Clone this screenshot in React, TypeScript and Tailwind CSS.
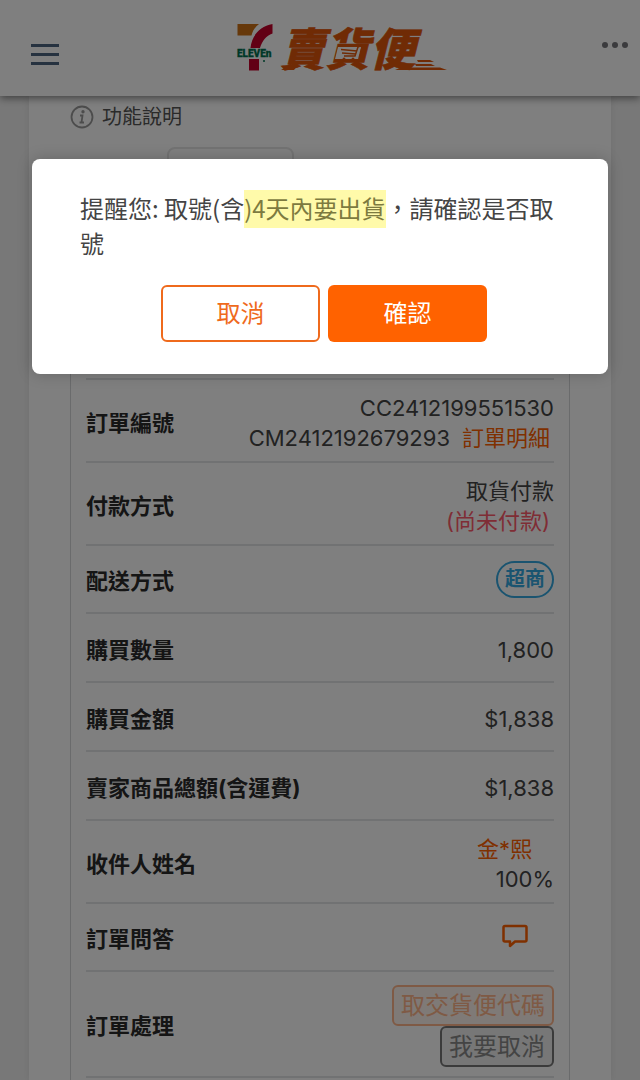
import type { ReactNode } from "react";

function Logo() {
  return (
    <svg viewBox="0 0 212 50" className="ml-6 h-[50px] w-[212px] overflow-visible" role="img" aria-label="7-ELEVEN 賣貨便">
      <path d="M0.500 1H22C18 4 15.500 8 14.500 12.500H0.500Z" fill="#cc7014" />
      <path d="M35.500 1V10.500C29 13 25 18 23 25H13.500C14.500 14 22 3 35.500 1Z" fill="#c4002a" />
      <path d="M12 36H22V47.500H12Z" fill="#c4002a" />
      <text x="0" y="34" fontSize="10" fontWeight="900" fontFamily="Roboto, sans-serif" fill="#00704f" stroke="#00704f" strokeWidth="0.300">ELEVEn</text>
      <circle cx="27" cy="38" r="1" fill="#00704f" />
      <text x="43" y="43" fontSize="45" fontWeight="900" fontStyle="italic" fontFamily="'Noto Sans CJK TC', sans-serif" fill="#e0560a" stroke="#e0560a" strokeWidth="0.600">賣貨便</text>
      <path d="M101 24H124L121 36H98Z" fill="#fff" />
      <path d="M125 22L121 24L118 33H107M104 26.500L120 28M105 30L119 31" fill="none" stroke="#e0560a" strokeWidth="1.500" />
      <circle cx="107" cy="36" r="1.500" fill="#e0560a" />
      <circle cx="116" cy="36" r="1.500" fill="#e0560a" />
      <path d="M44 47L51 43H60L57 47ZM158 47L164 44.500H203L210 47ZM180 37H193L197 39H181ZM178 41H194L198 43H179Z" fill="#e0560a" />
    </svg>
  );
}

const rowHeights = {
  tall: "h-[83px]",
  normal: "h-[69px]",
  compact: "h-[68px]",
  actions: "h-[106px]",
};

function Row({ label, size = "normal", children }: { label: string; size?: keyof typeof rowHeights; children: ReactNode }) {
  return (
    <tr className={`flex items-center justify-between border-b-2 border-[#e2e5e7] pt-1 ${rowHeights[size]}`}>
      <th scope="row" className="text-left font-bold whitespace-nowrap text-[#2a2a2a]">
        {label}
      </th>
      <td className="text-right whitespace-nowrap">{children}</td>
    </tr>
  );
}

export default function App() {
  return (
    <div className="relative flex min-h-screen flex-col bg-[#f1f1f1] font-['Inter','Noto_Sans_CJK_TC',sans-serif] text-[22px] leading-[30px] text-[#444]">
      <header className="relative z-10 flex h-24 items-center justify-between bg-white pr-3 pl-[31px] shadow-[0_2px_8px_rgba(0,0,0,0.5)]">
        <button type="button" aria-label="選單" className="mt-3 flex w-7 flex-col gap-[6px]">
          <span className="h-[3px] bg-[#4c6480]" />
          <span className="h-[3px] bg-[#4c6480]" />
          <span className="h-[3px] bg-[#4c6480]" />
        </button>
        <Logo />
        <button type="button" aria-label="更多" className="mb-[6px] flex gap-1">
          <span className="size-[6px] rounded-full bg-[#77777c]" />
          <span className="size-[6px] rounded-full bg-[#77777c]" />
          <span className="size-[6px] rounded-full bg-[#77777c]" />
        </button>
      </header>

      <main className="mx-[29px] flex grow flex-col bg-white px-[41px] shadow-[0_0_8px_rgba(0,0,0,0.08)]">
        <p className="flex items-center gap-2 pt-[6px] text-[20px] text-[#555]">
          <svg viewBox="0 0 24 24" className="size-6" fill="none" stroke="#999" strokeWidth="1.800">
            <circle cx="12" cy="12" r="10.500" />
            <path d="M10 10.500H12.500L11.500 17.500H14M9.500 17.500H11.500" />
            <circle cx="13" cy="6.800" r="0.800" fill="#999" />
          </svg>
          功能說明
        </p>
        <input aria-label="篩選" className="mt-[15px] ml-[97px] h-11 w-[127px] rounded-lg border-2 border-[#e6e6e6]" />

        <section className="mt-2 grow border-x border-t border-[#d4d7d9] px-[15px]">
          <table className="block w-full">
            <tbody className="block">
              <tr className="block border-b-2 border-[#e2e5e7]">
                <td className="block h-[178px]" />
              </tr>
              <Row label="訂單編號" size="tall">
                CC2412199551530
                <br />
                CM2412192679293
                <a href="#detail" className="mr-1 ml-3 text-[#ff6000]">訂單明細</a>
              </Row>
              <Row label="付款方式" size="tall">
                取貨付款
                <br />
                <span className="mr-1 text-[#ff5a6a]">(尚未付款)</span>
              </Row>
              <Row label="配送方式" size="compact">
                <span className="mb-1 inline-block rounded-full border-2 border-[#35a8e0] px-[7px] align-middle text-[20px] leading-[33px] font-bold text-[#35a8e0]">超商</span>
              </Row>
              <Row label="購買數量">1,800</Row>
              <Row label="購買金額">$1,838</Row>
              <Row label="賣家商品總額(含運費)">$1,838</Row>
              <Row label="收件人姓名" size="tall">
                <a href="#buyer" className="mr-[22px] text-[#ff6000]">金*熙</a>
                <br />
                100%
              </Row>
              <Row label="訂單問答" size="compact">
                <button type="button" aria-label="訂單問答" className="mr-[26px] mb-2 align-middle">
                  <svg viewBox="0 0 26 24" className="h-6 w-[26px]" fill="none" stroke="#ff6000" strokeWidth="2.500" strokeLinejoin="round">
                    <path d="M3 2H23Q24.500 2 24.500 3.500V16Q24.500 17.500 23 17.500H13L8 22V17.500H3Q1.500 17.500 1.500 16V3.500Q1.500 2 3 2Z" />
                  </svg>
                </button>
              </Row>
              <Row label="訂單處理" size="actions">
                <div className="flex flex-col items-end">
                  <button type="button" className="rounded-md border-2 border-[#ffb58a] bg-[#fff4ee] px-[7px] text-[24px] leading-[37px] text-[#ffb58a]">取交貨便代碼</button>
                  <button type="button" className="rounded-md border-2 border-[#777] bg-[#eee] px-[7px] text-[24px] leading-[37px] text-[#888]">我要取消</button>
                </div>
              </Row>
            </tbody>
          </table>
        </section>
      </main>

      <div className="absolute inset-0 z-20 bg-black/50 px-8 pt-[159px]">
        <div role="dialog" aria-modal="true" className="rounded-lg bg-white px-12 pt-[31px] pb-8 font-['Noto_Sans_CJK_TC',sans-serif] text-[24px] leading-[35px] text-[#444] shadow-[0_0_16px_rgba(0,0,0,0.2)]">
          <p>
            提醒您: 取號(含<mark className="bg-[#fffaaa] pb-[3px] text-[#7d7a40]">)4天內要出貨</mark>，請確認是否取號
          </p>
          <div className="mt-[25px] flex justify-center">
            <button type="button" className="ml-2 h-[57px] w-[159px] rounded-md border-2 border-[#ef6a1c] pb-1 text-[#ef6a1c]">取消</button>
            <button type="button" className="ml-2 h-[57px] w-[159px] rounded-md bg-[#ff6200] pb-1 text-white">確認</button>
          </div>
        </div>
      </div>
    </div>
  );
}
